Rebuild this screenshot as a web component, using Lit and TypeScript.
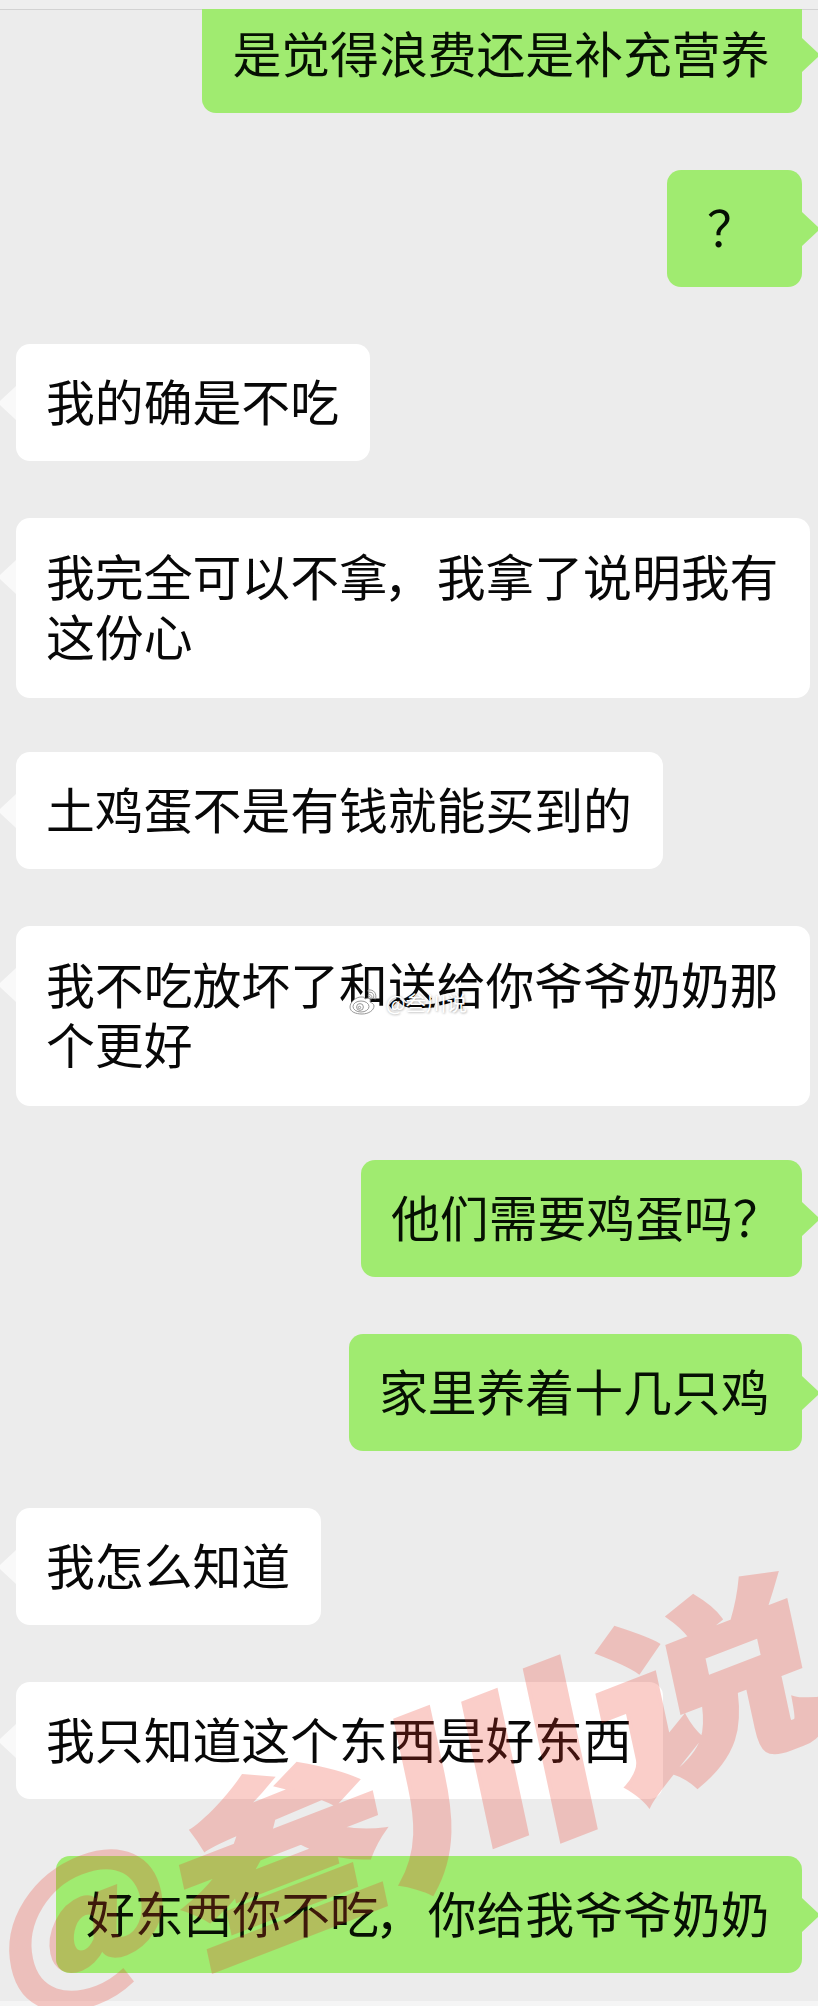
import { LitElement, html, css } from "lit";
import { customElement, property } from "lit/decorators.js";
import { classMap } from "lit/directives/class-map.js";

type Message = {
  mine: boolean;
  lines: string[];
  variant?: "cut" | "short" | "question";
};

const MESSAGES: Message[] = [
  { mine: true, lines: ["是觉得浪费还是补充营养"], variant: "cut" },
  { mine: true, lines: ["？"], variant: "short" },
  { mine: false, lines: ["我的确是不吃"] },
  { mine: false, lines: ["我完全可以不拿，我拿了说明我有", "这份心"] },
  { mine: false, lines: ["土鸡蛋不是有钱就能买到的"] },
  { mine: false, lines: ["我不吃放坏了和送给你爷爷奶奶那", "个更好"] },
  { mine: true, lines: ["他们需要鸡蛋吗？"], variant: "question" },
  { mine: true, lines: ["家里养着十几只鸡"] },
  { mine: false, lines: ["我怎么知道"] },
  { mine: false, lines: ["我只知道这个东西是好东西"] },
  { mine: true, lines: ["好东西你不吃，你给我爷爷奶奶"] },
];

@customElement("chat-bubble")
export class ChatBubble extends LitElement {
  @property({ attribute: false }) message!: Message;

  static styles = css`
    :host {
      display: flex;
    }
    .bubble {
      position: relative;
      box-sizing: border-box;
      height: 117px;
      padding: 25.5px 31.2px 31.5px 30px;
      border-radius: 14px;
      background: #fff;
      color: #080808;
      font-size: 48.83px;
      line-height: 60px;
      white-space: nowrap;
    }
    .mine {
      margin-left: auto;
      padding-left: 30px;
      padding-right: 32.5px;
      background: #a0eb70;
      color: #061003;
    }
    .double {
      height: 180px;
      padding: 27px 32px 33px 30px;
      margin-bottom: -3px;
    }
    .cut {
      height: 104px;
      padding-top: 12.5px;
      border-top-left-radius: 0;
      border-top-right-radius: 0;
    }
    .short {
      width: 135px;
      padding-left: 40px;
    }
    .question {
      width: 441px;
    }
    .line {
      display: block;
    }
    .comma {
      margin: 0 4px 0 -4px;
    }
    .tail {
      position: absolute;
      top: 42px;
      left: -17px;
      width: 17px;
      height: 34px;
      fill: #f9f9f9;
    }
    .mine .tail {
      left: auto;
      right: -17px;
      fill: #a0eb70;
    }
    .cut .tail {
      top: 29px;
    }
  `;

  private line(text: string) {
    const [head, tail] = text.split("，");
    return html`<span class="line"
      >${head}${tail === undefined ? "" : html`<span class="comma">，</span>${tail}`}</span
    >`;
  }

  render() {
    const { mine, lines, variant } = this.message;
    return html`<div
      class=${classMap({
        bubble: true,
        mine,
        double: lines.length > 1,
        cut: variant === "cut",
        short: variant === "short",
        question: variant === "question",
      })}
    >
      <svg class="tail" viewBox="0 0 17 34">
        <path d=${mine ? "M0 0L17 16V18L0 34Z" : "M17 0L1 15Q0 17 1 19L17 34Z"} />
      </svg>
      ${lines.map((l) => this.line(l))}
    </div>`;
  }
}

@customElement("app-root")
export class AppRoot extends LitElement {
  static styles = css`
    :host {
      display: block;
      position: relative;
      width: 818px;
      height: 2006px;
      overflow: hidden;
      background: #ececec;
      font-family: "Noto Sans CJK SC", sans-serif;
    }
    .page {
      display: flex;
      flex-direction: column;
      height: 2006px;
    }
    .top {
      flex: none;
      box-sizing: border-box;
      height: 10px;
      margin-bottom: -1px;
      background: #eeeeee;
      border-bottom: 1px solid #d2d2d2;
    }
    .chat {
      flex: 1;
      display: flex;
      flex-direction: column;
      gap: 57px;
      padding: 0 16px;
    }
    .foot {
      flex: none;
      height: 5px;
      background: #f5f5f5;
    }
    .overlay {
      position: absolute;
      inset: 0;
      width: 818px;
      height: 2006px;
      pointer-events: none;
    }
    .big {
      fill: #ec3826;
      stroke: #ec3826;
      stroke-width: 1.6px;
      stroke-linejoin: miter;
      opacity: 0.245;
      font-size: 100px;
      font-weight: 900;
    }
    .tag {
      position: absolute;
      left: 349px;
      top: 986px;
      display: flex;
      align-items: center;
      gap: 8px;
      height: 32px;
    }
    .weibo {
      width: 29px;
      height: 28px;
    }
    .name {
      color: #fff;
      font-size: 20.5px;
      line-height: 30px;
      text-shadow: 0 0 3px rgba(0, 0, 0, 0.28), 1px 1px 2px rgba(0, 0, 0, 0.15);
    }
  `;

  render() {
    return html`
      <div class="page">
        <div class="top"></div>
        <div class="chat">
          ${MESSAGES.map((m) => html`<chat-bubble .message=${m}></chat-bubble>`)}
        </div>
        <div class="foot"></div>
      </div>
      <svg class="overlay" viewBox="0 0 818 2006">
        <g class="big" transform="matrix(.934 -.36 .21 .975 0 0)">
          <text transform="translate(-416 1903) scale(1.74 1.5)">@</text>
          <text transform="translate(-228 1931) scale(2.22 1.84)">叁</text>
          <text transform="translate(-10 1931) scale(2.36 1.96)">川</text>
          <text transform="translate(222 1929) scale(2.36 1.93)">说</text>
        </g>
      </svg>
      <div class="tag">
        <svg class="weibo" viewBox="0 0 29 28" fill="#fff" stroke="#8b8b8b" stroke-width="0.9">
          <path d="M12 9C7 9 1 14 1 19c0 5 6 7 12 7 7 0 12-4 12-8 0-2-2-3-4-4 1-3-1-5-5-3 0-2-2-2-4-2Z" />
          <ellipse cx="12" cy="18.500" rx="8" ry="5.500" />
          <circle cx="11" cy="19" r="3.400" />
          <circle cx="10.500" cy="19.500" r="1.200" />
          <path d="M19 2c6-1 9 4 7.500 9l-2-.7c1-4-1-6.600-5-6Z" />
          <path d="M19.500 6.500c3 0 4 2 3 4.500l-1.500-.5c.5-1.500 0-2.500-1.800-2.300Z" />
        </svg>
        <span class="name">@叁川说</span>
      </div>
    `;
  }
}
